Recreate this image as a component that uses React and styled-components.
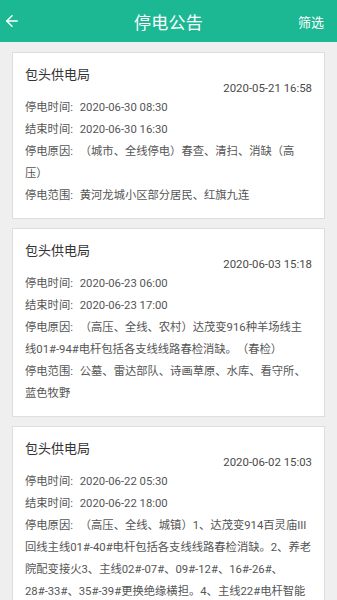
import React from "react"
import styled, { createGlobalStyle } from "styled-components"
import { ArrowLeft } from "lucide-react"

const GlobalStyle = createGlobalStyle`
  body {
    margin: 0;
    background: #efefef;
    font-family: Roboto, "Noto Sans CJK SC", sans-serif;
  }
`

const Page = styled.div`
  min-height: 600px;
  background: #efefef;
`

const Header = styled.header`
  height: 42px;
  background: #1cb894;
  color: #fff;
  display: grid;
  grid-template-columns: 60px 1fr 60px;
  align-items: center;
`

const Back = styled.div`
  display: flex;
  align-items: center;
  padding-left: 3px;
`

const Title = styled.h1`
  margin: 0;
  text-align: center;
  font-size: 17px;
  font-weight: 400;
  letter-spacing: 0.3px;
`

const Filter = styled.div`
  text-align: right;
  padding-right: 13px;
  font-size: 13px;
`

const List = styled.div`
  display: flex;
  flex-direction: column;
  gap: 9px;
  padding: 10px 12px 0 12px;
`

const Card = styled.div`
  background: #fff;
  border: 1px solid #dedede;
  padding: 12px 12px 11px 12px;
`

const CardHead = styled.div`
  display: flex;
  flex-direction: column;
`

const Bureau = styled.div`
  font-size: 13px;
  line-height: 20px;
  color: #333;
`

const PostDate = styled.div`
  margin-top: -6px;
  align-self: flex-end;
  font-size: 11.4px;
  line-height: 18px;
  color: #4a4a4a;
`

const Line = styled.div`
  font-size: 11.3px;
  line-height: 22px;
  color: #555;
  text-spacing-trim: space-all;
`

const Label = styled.span`
  margin-right: 4px;
`

const notices = [
  {
    date: "2020-05-21 16:58",
    start: "2020-06-30 08:30",
    end: "2020-06-30 16:30",
    reason: "（城市、全线停电）春查、清扫、消缺（高压）",
    range: "黄河龙城小区部分居民、红旗九连",
  },
  {
    date: "2020-06-03 15:18",
    start: "2020-06-23 06:00",
    end: "2020-06-23 17:00",
    reason: "（高压、全线、农村）达茂变916种羊场线主线01#-94#电杆包括各支线线路春检消缺。（春检）",
    range: "公墓、雷达部队、诗画草原、水库、看守所、蓝色牧野",
  },
  {
    date: "2020-06-02 15:03",
    start: "2020-06-22 05:30",
    end: "2020-06-22 18:00",
    reason:
      "（高压、全线、城镇）1、达茂变914百灵庙III回线主线01#-40#电杆包括各支线线路春检消缺。2、养老院配变接火3、主线02#-07#、09#-12#、16#-26#、28#-33#、35#-39#更换绝缘横担。4、主线22#电杆智能真空断路器1台",
    range: "百灵庙镇部分居民",
  },
]

const Field = ({ label, children }) => (
  <Line>
    <Label>{label + ": "}</Label>
    {children}
  </Line>
)

const App = () => {
  return (
    <Page lang="zh-CN">
      <GlobalStyle />
      <Header>
        <Back>
          <ArrowLeft size={18} strokeWidth={2} />
        </Back>
        <Title>停电公告</Title>
        <Filter>筛选</Filter>
      </Header>
      <List>
        {notices.map((n) => (
          <Card key={n.date}>
            <CardHead>
              <Bureau>包头供电局</Bureau>
              <PostDate>{n.date}</PostDate>
            </CardHead>
            <Field label="停电时间">{n.start}</Field>
            <Field label="结束时间">{n.end}</Field>
            <Field label="停电原因">{n.reason}</Field>
            <Field label="停电范围">{n.range}</Field>
          </Card>
        ))}
      </List>
    </Page>
  )
}

export default App
